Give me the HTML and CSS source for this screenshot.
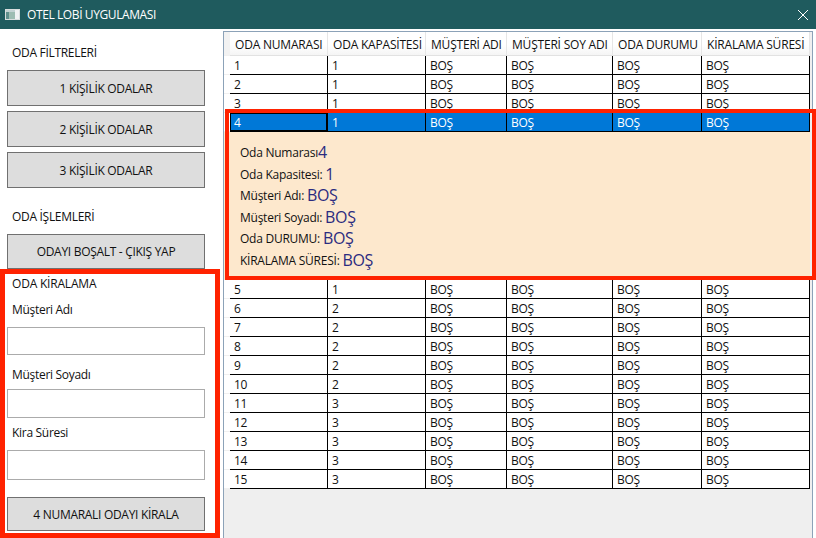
FILE: index.html
```html
<!DOCTYPE html>
<html lang="tr">
<head>
    <meta charset="UTF-8">
    <meta name="viewport" content="width=device-width, initial-scale=1.0">
    <title>Otel Lobi Uygulaması</title>
    <link rel="stylesheet" href="styles.css">
</head>
<body>
    <div class="window">
        <header class="titlebar">
            <svg class="app-icon" width="15" height="11" viewBox="0 0 15 11">
                <rect x="0" y="0" width="15" height="11" fill="#d8dede"/>
                <rect x="1" y="1" width="9" height="2" fill="#c3d3d3"/>
                <rect x="1" y="3" width="3" height="7" fill="#5f8f8c"/>
                <rect x="4" y="3" width="6" height="7" fill="#9dbdb2"/>
                <rect x="10" y="1" width="4" height="9" fill="#f0f3f3"/>
            </svg>
            <span class="title">OTEL LOBİ UYGULAMASI</span>
            <svg class="close" width="10" height="10" viewBox="0 0 10 10">
                <path d="M0 0L10 10M10 0L0 10" stroke="#fff" stroke-width="1" fill="none"/>
            </svg>
        </header>
        <div class="main">
            <aside class="sidebar">
                <p class="heading first">ODA FİLTRELERİ</p>
                <button class="btn">1 KİŞİLİK ODALAR</button>
                <button class="btn">2 KİŞİLİK ODALAR</button>
                <button class="btn">3 KİŞİLİK ODALAR</button>
                <p class="heading second">ODA İŞLEMLERİ</p>
                <button class="btn checkout">ODAYI BOŞALT - ÇIKIŞ YAP</button>
                <section class="rent">
                    <p class="rent-title">ODA KİRALAMA</p>
                    <label class="rent-label name-label">Müşteri Adı</label>
                    <input class="rent-input name-input" type="text">
                    <label class="rent-label surname-label">Müşteri Soyadı</label>
                    <input class="rent-input surname-input" type="text">
                    <label class="rent-label time-label">Kira Süresi</label>
                    <input class="rent-input time-input" type="text">
                    <button class="btn rent-btn">4 NUMARALI ODAYI KİRALA</button>
                </section>
            </aside>
            <div class="grid">
                <table class="rooms">
                    <colgroup>
                        <col class="c-gutter"><col class="c-num"><col class="c-cap"><col class="c-name"><col class="c-sur"><col class="c-state"><col class="c-time">
                    </colgroup>
                    <thead>
                        <tr>
                            <th class="gutter"></th>
                            <th>ODA NUMARASI</th>
                            <th>ODA KAPASİTESİ</th>
                            <th>MÜŞTERİ ADI</th>
                            <th>MÜŞTERİ SOY ADI</th>
                            <th>ODA DURUMU</th>
                            <th>KİRALAMA SÜRESİ</th>
                        </tr>
                    </thead>
                    <tbody>
                        <tr><td class="gutter"></td><td>1</td><td>1</td><td>BOŞ</td><td>BOŞ</td><td>BOŞ</td><td>BOŞ</td></tr>
                        <tr><td class="gutter"></td><td>2</td><td>1</td><td>BOŞ</td><td>BOŞ</td><td>BOŞ</td><td>BOŞ</td></tr>
                        <tr><td class="gutter"></td><td>3</td><td>1</td><td>BOŞ</td><td>BOŞ</td><td>BOŞ</td><td>BOŞ</td></tr>
                        <tr class="selected"><td class="gutter"></td><td class="focused">4</td><td>1</td><td>BOŞ</td><td>BOŞ</td><td>BOŞ</td><td>BOŞ</td></tr>
                        <tr class="detail-row">
                            <td class="gutter"></td>
                            <td colspan="6">
                                <div class="detail">
                                    <p class="detail-line">Oda Numarası<span class="value">4</span></p>
                                    <p class="detail-line">Oda Kapasitesi: <span class="value">1</span></p>
                                    <p class="detail-line">Müşteri Adı: <span class="value">BOŞ</span></p>
                                    <p class="detail-line">Müşteri Soyadı: <span class="value">BOŞ</span></p>
                                    <p class="detail-line">Oda DURUMU: <span class="value">BOŞ</span></p>
                                    <p class="detail-line">KİRALAMA SÜRESİ: <span class="value">BOŞ</span></p>
                                </div>
                            </td>
                        </tr>
                        <tr><td class="gutter"></td><td>5</td><td>1</td><td>BOŞ</td><td>BOŞ</td><td>BOŞ</td><td>BOŞ</td></tr>
                        <tr><td class="gutter"></td><td>6</td><td>2</td><td>BOŞ</td><td>BOŞ</td><td>BOŞ</td><td>BOŞ</td></tr>
                        <tr><td class="gutter"></td><td>7</td><td>2</td><td>BOŞ</td><td>BOŞ</td><td>BOŞ</td><td>BOŞ</td></tr>
                        <tr><td class="gutter"></td><td>8</td><td>2</td><td>BOŞ</td><td>BOŞ</td><td>BOŞ</td><td>BOŞ</td></tr>
                        <tr><td class="gutter"></td><td>9</td><td>2</td><td>BOŞ</td><td>BOŞ</td><td>BOŞ</td><td>BOŞ</td></tr>
                        <tr><td class="gutter"></td><td>10</td><td>2</td><td>BOŞ</td><td>BOŞ</td><td>BOŞ</td><td>BOŞ</td></tr>
                        <tr><td class="gutter"></td><td>11</td><td>3</td><td>BOŞ</td><td>BOŞ</td><td>BOŞ</td><td>BOŞ</td></tr>
                        <tr><td class="gutter"></td><td>12</td><td>3</td><td>BOŞ</td><td>BOŞ</td><td>BOŞ</td><td>BOŞ</td></tr>
                        <tr><td class="gutter"></td><td>13</td><td>3</td><td>BOŞ</td><td>BOŞ</td><td>BOŞ</td><td>BOŞ</td></tr>
                        <tr><td class="gutter"></td><td>14</td><td>3</td><td>BOŞ</td><td>BOŞ</td><td>BOŞ</td><td>BOŞ</td></tr>
                        <tr><td class="gutter"></td><td>15</td><td>3</td><td>BOŞ</td><td>BOŞ</td><td>BOŞ</td><td>BOŞ</td></tr>
                    </tbody>
                </table>
                <div class="detail-mark"></div>
            </div>
        </div>
    </div>
</body>
</html>
```

FILE: styles.css
```css
html, body { margin: 0; padding: 0; height: 100%; overflow: hidden; }
body { font-family: "Open Sans", "Noto Sans", sans-serif; font-size: 12px; color: #111; background: #fff; }
p { margin: 0; }

.window { display: flex; flex-direction: column; width: 816px; height: 538px; }

.titlebar { display: flex; align-items: center; height: 29px; flex: none; background: #1f5b5e; color: #fff; padding: 0 8px 0 5px; box-sizing: border-box; }
.app-icon { margin-right: 7px; }
.title { font-size: 12px; letter-spacing: -0.4px; flex: 1; }

.main { display: flex; flex: 1; min-height: 0; }

.sidebar { display: flex; flex-direction: column; align-items: flex-start; width: 223px; flex: none; }
.heading { flex: none; line-height: 16px; padding-left: 12px; letter-spacing: -0.3px; }
.heading.first { margin-top: 16px; margin-bottom: 9px; }
.heading.second { margin-top: 16px; margin-bottom: 9px; }

.btn { display: block; flex: none; width: 198px; height: 36px; margin: 0 0 5px 7px; padding: 0; border: 1px solid #707070; background: #dddddd; color: #111; font-family: inherit; font-size: 12px; letter-spacing: -0.3px; }
.checkout { height: 35px; margin-bottom: 0; }

.rent { display: flex; flex-direction: column; align-items: flex-start; flex: none; width: 220px; height: 269px; box-sizing: border-box; border: 5px solid #ff2200; }
.rent-title { flex: none; line-height: 16px; margin: 2px 0 0 7px; letter-spacing: -0.2px; }
.rent-label { flex: none; line-height: 16px; margin-left: 7px; letter-spacing: -0.3px; }
.name-label { margin-top: 10px; }
.surname-label { margin-top: 12px; }
.time-label { margin-top: 7px; }
.rent-input { display: block; flex: none; width: 198px; margin-left: 2px; padding: 0; box-sizing: border-box; border: 1px solid #ababab; background: #fff; }
.name-input { height: 28px; margin-top: 9px; }
.surname-input { height: 29px; margin-top: 6px; }
.time-input { height: 30px; margin-top: 9px; }
.rent-btn { width: 198px; height: 34px; margin: 17px 0 0 2px; }

.grid { position: relative; flex: 1; margin: 2px 3px 0 0; border: 1px solid #8ca2b8; border-bottom: 0; background: #efefef; }
.rooms { table-layout: fixed; width: 586px; border-collapse: separate; border-spacing: 0; }
.c-gutter { width: 6px; }
.c-num { width: 98px; }
.c-cap { width: 98px; }
.c-name { width: 81px; }
.c-sur { width: 106px; }
.c-state { width: 89px; }
.c-time { width: 108px; }

.rooms th { height: 24px; padding: 1px 0 0 5px; box-sizing: border-box; background: linear-gradient(#fff 55%, #f5f5f5); border-right: 1px solid #e6e6e6; border-bottom: 1px solid #e2e2e2; font-weight: 400; text-align: left; letter-spacing: -0.2px; white-space: nowrap; overflow: hidden; }
.rooms td { height: 19px; padding: 1px 0 0 4px; box-sizing: border-box; background: #fff; border-right: 1px solid #000; border-bottom: 1px solid #000; line-height: 17px; letter-spacing: -0.3px; white-space: nowrap; }
.rooms .gutter { padding: 0; background: #fff; border-right: 0; border-bottom: 1px solid #f0f0f0; }
.rooms th.gutter { background: #f2f2f2; }

.selected td { background: #0078d7; color: #fff; }
.selected .gutter { background: #fff; }
.selected .focused { outline: 1px solid #000; outline-offset: -1px; box-shadow: inset 0 0 0 1px #000; }

.detail-row td { padding: 0; border-right: 0; border-bottom: 0; height: 148px; background: #fde8cd; }
.detail-row .gutter { background: #fde8cd; border-bottom: 0; }
.detail { display: flex; flex-direction: column; height: 148px; box-sizing: border-box; padding: 10px 0 0 10px; }
.detail-line { display: flex; align-items: center; height: 21.5px; letter-spacing: -0.25px; white-space: pre; }
.value { font-size: 16px; color: #2b2b80; letter-spacing: -0.3px; }

.detail-mark { position: absolute; left: 1px; top: 77px; width: 591px; height: 171px; box-sizing: border-box; border: 4px solid #ff2200; }
```
